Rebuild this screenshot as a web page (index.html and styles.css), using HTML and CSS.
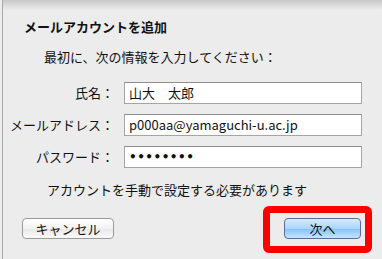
FILE: index.html
```html
<!DOCTYPE html>
<html lang="ja">
<head>
    <meta charset="UTF-8">
    <title>メールアカウントを追加</title>
    <link rel="stylesheet" href="styles.css">
</head>
<body>
    <div class="sheet">
        <h1 class="title">メールアカウントを追加</h1>
        <p class="lead">最初に、次の情報を入力してください：</p>
        <div class="form">
            <label class="label">氏名：</label>
            <div class="field">山大　太郎</div>
            <label class="label">メールアドレス：</label>
            <div class="field">p000aa@yamaguchi-u.ac.jp</div>
            <label class="label">パスワード：</label>
            <div class="field dots">••••••••</div>
        </div>
        <p class="note">アカウントを手動で設定する必要があります</p>
        <div class="buttons">
            <button class="btn cancel">キャンセル</button>
            <div class="highlight">
                <button class="btn primary">次へ</button>
            </div>
        </div>
    </div>
</body>
</html>
```

FILE: styles.css
```css
body {
    margin: 0;
    background: #ececec;
    font-family: "Noto Sans CJK JP", "Noto Sans", sans-serif;
    font-size: 13px;
    color: #111;
}

.sheet {
    position: relative;
    height: 259px;
    box-sizing: border-box;
    margin-left: 2px;
    border-left: 1px solid #a9a9a9;
    padding: 17px 0 0 21px;
    overflow: hidden;
}

.sheet::before {
    content: '';
    position: absolute;
    top: 0;
    left: 0;
    right: 0;
    height: 10px;
    background: linear-gradient(#c9c9c9, rgba(236,236,236,0));
}

.title {
    margin: 0;
    font-size: 13px;
    font-weight: bold;
    line-height: 20px;
}

.lead {
    margin: 10px 0 0 20px;
    line-height: 20px;
}

.form {
    display: grid;
    grid-template-columns: 89px 238px;
    column-gap: 11px;
    row-gap: 10px;
    margin: 15px 0 0 0;
}

.label {
    line-height: 22px;
    white-space: nowrap;
    justify-self: end;
    margin-right: -1px;
}

.field {
    height: 22px;
    box-sizing: border-box;
    border: 1px solid #a5a5a5;
    border-top-color: #8e8e8e;
    background: #fff;
    padding: 0 4px;
    line-height: 20px;
    font-size: 13px;
    white-space: nowrap;
}

.dots {
    font-family: "DejaVu Sans", sans-serif;
    font-size: 12px;
    font-weight: bold;
    letter-spacing: 0.5px;
}

.note {
    margin: 12px 0 0 23px;
    line-height: 20px;
}

.buttons {
    display: flex;
    justify-content: space-between;
    align-items: flex-start;
    margin-top: 6px;
    width: 348px;
}

.btn {
    font-family: inherit;
    font-size: 13px;
    height: 21px;
    padding: 0;
    border: 1px solid #9a9a9a;
    border-radius: 4px;
    background: linear-gradient(#ffffff, #f2f2f2 50%, #e8e8e8 51%, #f9f9f9);
    color: #111;
    line-height: 19px;
    width: 92px;
}

.cancel {
    margin: 12px 0 0 -2px;
}

.highlight {
    border: 7px solid #ff0000;
    border-radius: 6px;
    padding: 5px 4px 7px 14px;
}

.primary {
    display: block;
    width: 77px;
    border-color: #5a6d99;
    background: linear-gradient(#d6ecfd, #a9d5fb 50%, #84c1f8 51%, #c3e6ff);
}
```
